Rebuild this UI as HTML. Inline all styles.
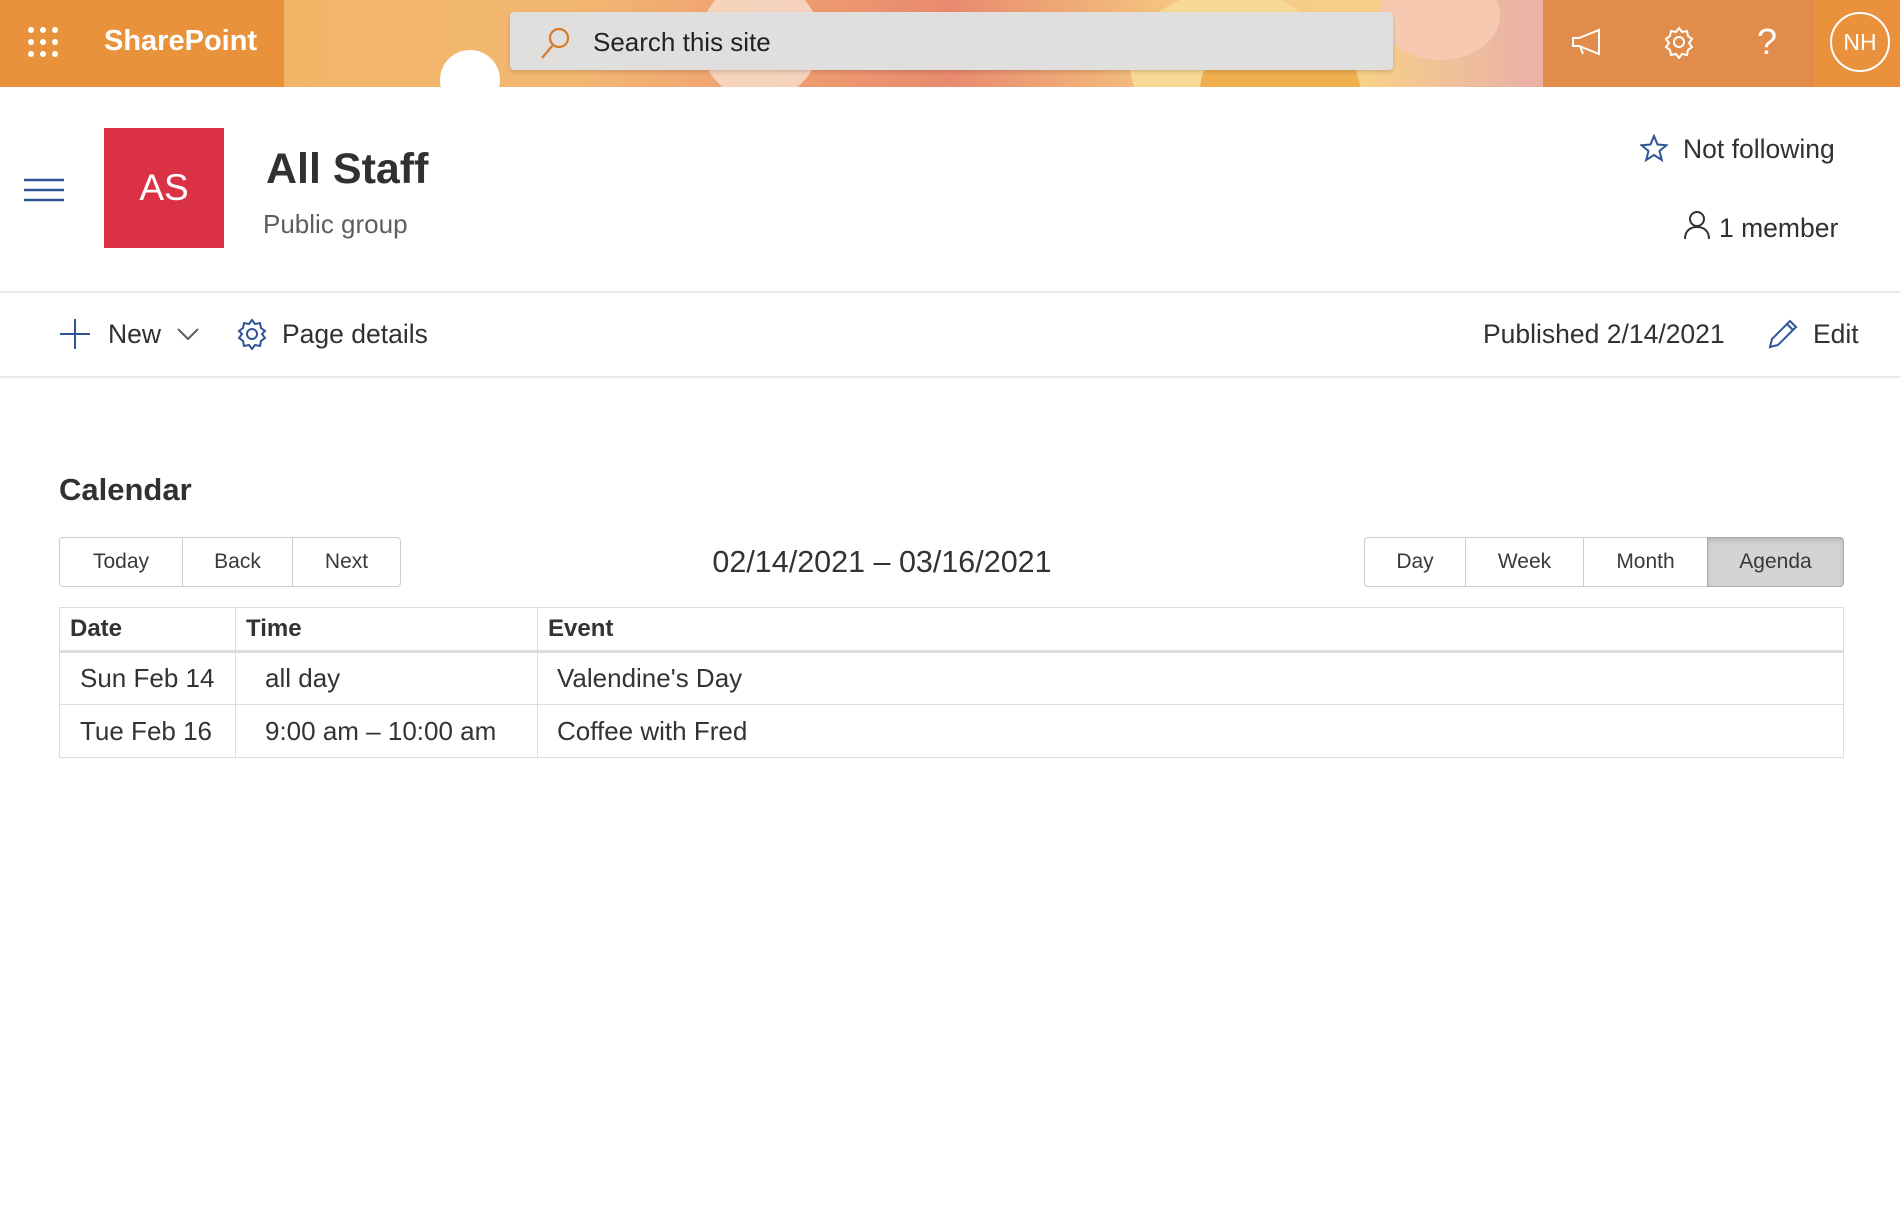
<!DOCTYPE html>
<html><head><meta charset="utf-8">
<style>
*{box-sizing:border-box;margin:0;padding:0}
body{width:1900px;height:1213px;overflow:hidden;background:#fff;font-family:"Liberation Sans",sans-serif;color:#323130;position:relative}
.abs{position:absolute}
#hdr{position:absolute;left:0;top:0;width:1900px;height:87px;overflow:hidden;background:linear-gradient(90deg,#f0b25c 0%,#f2b872 30%,#f0a070 40%,#e98a6e 50%,#f4c77f 62%,#f7d08a 72%,#eab3a6 80%)}
.blob{position:absolute;border-radius:50%}
.txt{position:absolute;white-space:nowrap;line-height:1}
.btn{position:absolute;top:537px;height:50px;border:1px solid #ccc;background:#fff;font-size:21px;color:#373a3c;display:flex;align-items:center;justify-content:center}
table{position:absolute;left:59px;top:607px;width:1785px;border-collapse:collapse;font-size:26px;color:#333}
td,th{border:1px solid #ddd;text-align:left;vertical-align:middle}
th{font-size:24px;font-weight:bold;height:44px;padding-left:10px;border-bottom:3px solid #ddd}
td{height:53px}
</style></head><body>
<div id="hdr">
  <div class="blob" style="left:440px;top:50px;width:60px;height:60px;background:#fff"></div>
  <div class="blob" style="left:700px;top:-20px;width:120px;height:120px;background:#f7e0cf;opacity:.8"></div>
  <div class="blob" style="left:1130px;top:-10px;width:200px;height:150px;background:#f8d894"></div>
  <div class="blob" style="left:1200px;top:30px;width:160px;height:120px;background:#f0b050"></div>
  <div class="blob" style="left:1380px;top:-30px;width:120px;height:90px;background:#f7c9b0"></div>
  <div class="abs" style="left:0;top:0;width:284px;height:87px;background:#e9923c"></div>
  <div class="abs" style="left:1543px;top:0;width:271px;height:87px;background:#e28c4c"></div>
  <div class="abs" style="left:1814px;top:0;width:86px;height:87px;background:#e9913c"></div>
  <svg class="abs" style="left:28px;top:27px" width="30" height="30" fill="#fff">
    <circle cx="3" cy="3" r="3"/><circle cx="15" cy="3" r="3"/><circle cx="27" cy="3" r="3"/>
    <circle cx="3" cy="15" r="3"/><circle cx="15" cy="15" r="3"/><circle cx="27" cy="15" r="3"/>
    <circle cx="3" cy="27" r="3"/><circle cx="15" cy="27" r="3"/><circle cx="27" cy="27" r="3"/></svg>
  <div class="txt" style="left:104px;top:27px;font-size:29px;color:#fff;font-weight:bold">SharePoint</div>
  <div class="abs" style="left:510px;top:12px;width:883px;height:58px;background:#e1dfdd;border-radius:4px;box-shadow:0 2px 4px rgba(0,0,0,.15)"></div>
  <svg class="abs" style="left:538px;top:26px" width="34" height="34" fill="none" stroke="#d87a2a" stroke-width="2.2"><circle cx="21" cy="12" r="9"/><line x1="15" y1="19" x2="4" y2="32"/></svg>
  <div class="txt" style="left:593px;top:29px;font-size:26px;color:#222">Search this site</div>
  <svg class="abs" style="left:1570px;top:27px" width="34" height="30" fill="none" stroke="#fff" stroke-width="2"><path d="M3 11h6l20-8v24L9 19H3z"/><path d="M10 19l3 8"/></svg>
  <svg class="abs" style="left:1662px;top:25px" width="34" height="34" fill="none" stroke="#fff" stroke-width="2"><circle cx="17" cy="17" r="5"/><path d="M17 3l3 4 5-1 1 5 4 3-3 4 3 4-4 3-1 5-5-1-3 4-3-4-5 1-1-5-4-3 3-4-3-4 4-3 1-5 5 1z"/></svg>
  <div class="txt" style="left:1757px;top:24px;font-size:36px;color:#fff">?</div>
  <div class="abs" style="left:1830px;top:12px;width:60px;height:60px;border:2px solid #fff;border-radius:50%;color:#fff;font-size:23px;display:flex;align-items:center;justify-content:center">NH</div>
</div>

<svg class="abs" style="left:24px;top:178px" width="40" height="24" stroke="#2f5597" stroke-width="2.5"><line x1="0" y1="2" x2="40" y2="2"/><line x1="0" y1="12" x2="40" y2="12"/><line x1="0" y1="22" x2="40" y2="22"/></svg>
<div class="abs" style="left:104px;top:128px;width:120px;height:120px;background:#db3145;color:#fff;font-size:37px;display:flex;align-items:center;justify-content:center">AS</div>
<div class="txt" style="left:266px;top:148px;font-size:43px;font-weight:bold;color:#323130">All Staff</div>
<div class="txt" style="left:263px;top:211px;font-size:26px;color:#605e5c">Public group</div>
<svg class="abs" style="left:1640px;top:134px" width="28" height="28" fill="none" stroke="#2f5597" stroke-width="2"><path d="M14 2l3.5 8.5 9 .7-7 5.8 2.3 9L14 21l-7.8 5 2.3-9-7-5.8 9-.7z"/></svg>
<div class="txt" style="left:1683px;top:136px;font-size:26.5px">Not following</div>
<svg class="abs" style="left:1683px;top:210px" width="28" height="30" fill="none" stroke="#323130" stroke-width="2"><circle cx="14" cy="9" r="7"/><path d="M2 29c0-8 5-12 12-12s12 4 12 12"/></svg>
<div class="txt" style="left:1719px;top:215px;font-size:26.5px">1 member</div>
<div class="abs" style="left:0;top:291px;width:1900px;height:2px;background:#eaeaea"></div>

<svg class="abs" style="left:60px;top:319px" width="30" height="30" stroke="#2f5597" stroke-width="2"><line x1="15" y1="0" x2="15" y2="30"/><line x1="0" y1="15" x2="30" y2="15"/></svg>
<div class="txt" style="left:108px;top:321px;font-size:26.5px">New</div>
<svg class="abs" style="left:177px;top:327px" width="22" height="14" fill="none" stroke="#605e5c" stroke-width="2"><path d="M1 2l10 10 10-10"/></svg>
<svg class="abs" style="left:236px;top:318px" width="32" height="32" fill="none" stroke="#2f5597" stroke-width="2"><circle cx="16" cy="16" r="5"/><path d="M16 2l3 4 5-1 1 5 4 3-3 3 3 4-4 3-1 5-5-1-3 4-3-4-5 1-1-5-4-3 3-4-3-3 4-3 1-5 5 1z"/></svg>
<div class="txt" style="left:282px;top:321px;font-size:26.5px">Page details</div>
<div class="txt" style="left:1483px;top:321px;font-size:26.5px">Published 2/14/2021</div>
<svg class="abs" style="left:1766px;top:317px" width="34" height="34" fill="none" stroke="#2f5597" stroke-width="2"><path d="M4 30l2-8L24 4l6 6-18 18z"/><path d="M21 7l6 6"/></svg>
<div class="txt" style="left:1813px;top:321px;font-size:26.5px">Edit</div>
<div class="abs" style="left:0;top:376px;width:1900px;height:2px;background:#eaeaea"></div>

<div class="txt" style="left:59px;top:474px;font-size:31px;font-weight:bold">Calendar</div>
<div class="btn" style="left:59px;width:124px;border-radius:4px 0 0 4px">Today</div>
<div class="btn" style="left:182px;width:111px">Back</div>
<div class="btn" style="left:292px;width:109px;border-radius:0 4px 4px 0">Next</div>
<div class="txt" style="left:0;width:1764px;top:547px;text-align:center;font-size:30.5px;color:#333">02/14/2021 – 03/16/2021</div>
<div class="btn" style="left:1364px;width:102px;border-radius:4px 0 0 4px">Day</div>
<div class="btn" style="left:1465px;width:119px">Week</div>
<div class="btn" style="left:1583px;width:125px">Month</div>
<div class="btn" style="left:1707px;width:137px;border-radius:0 4px 4px 0;background:#d4d4d4;border-color:#adadad;box-shadow:inset 0 3px 5px rgba(0,0,0,.125)">Agenda</div>

<table>
<tr><th style="width:176px">Date</th><th style="width:302px">Time</th><th>Event</th></tr>
<tr><td style="padding-left:20px">Sun Feb 14</td><td style="padding-left:29px">all day</td><td style="padding-left:19px">Valendine's Day</td></tr>
<tr><td style="padding-left:20px">Tue Feb 16</td><td style="padding-left:29px">9:00 am – 10:00 am</td><td style="padding-left:19px">Coffee with Fred</td></tr>
</table>
</body></html>
